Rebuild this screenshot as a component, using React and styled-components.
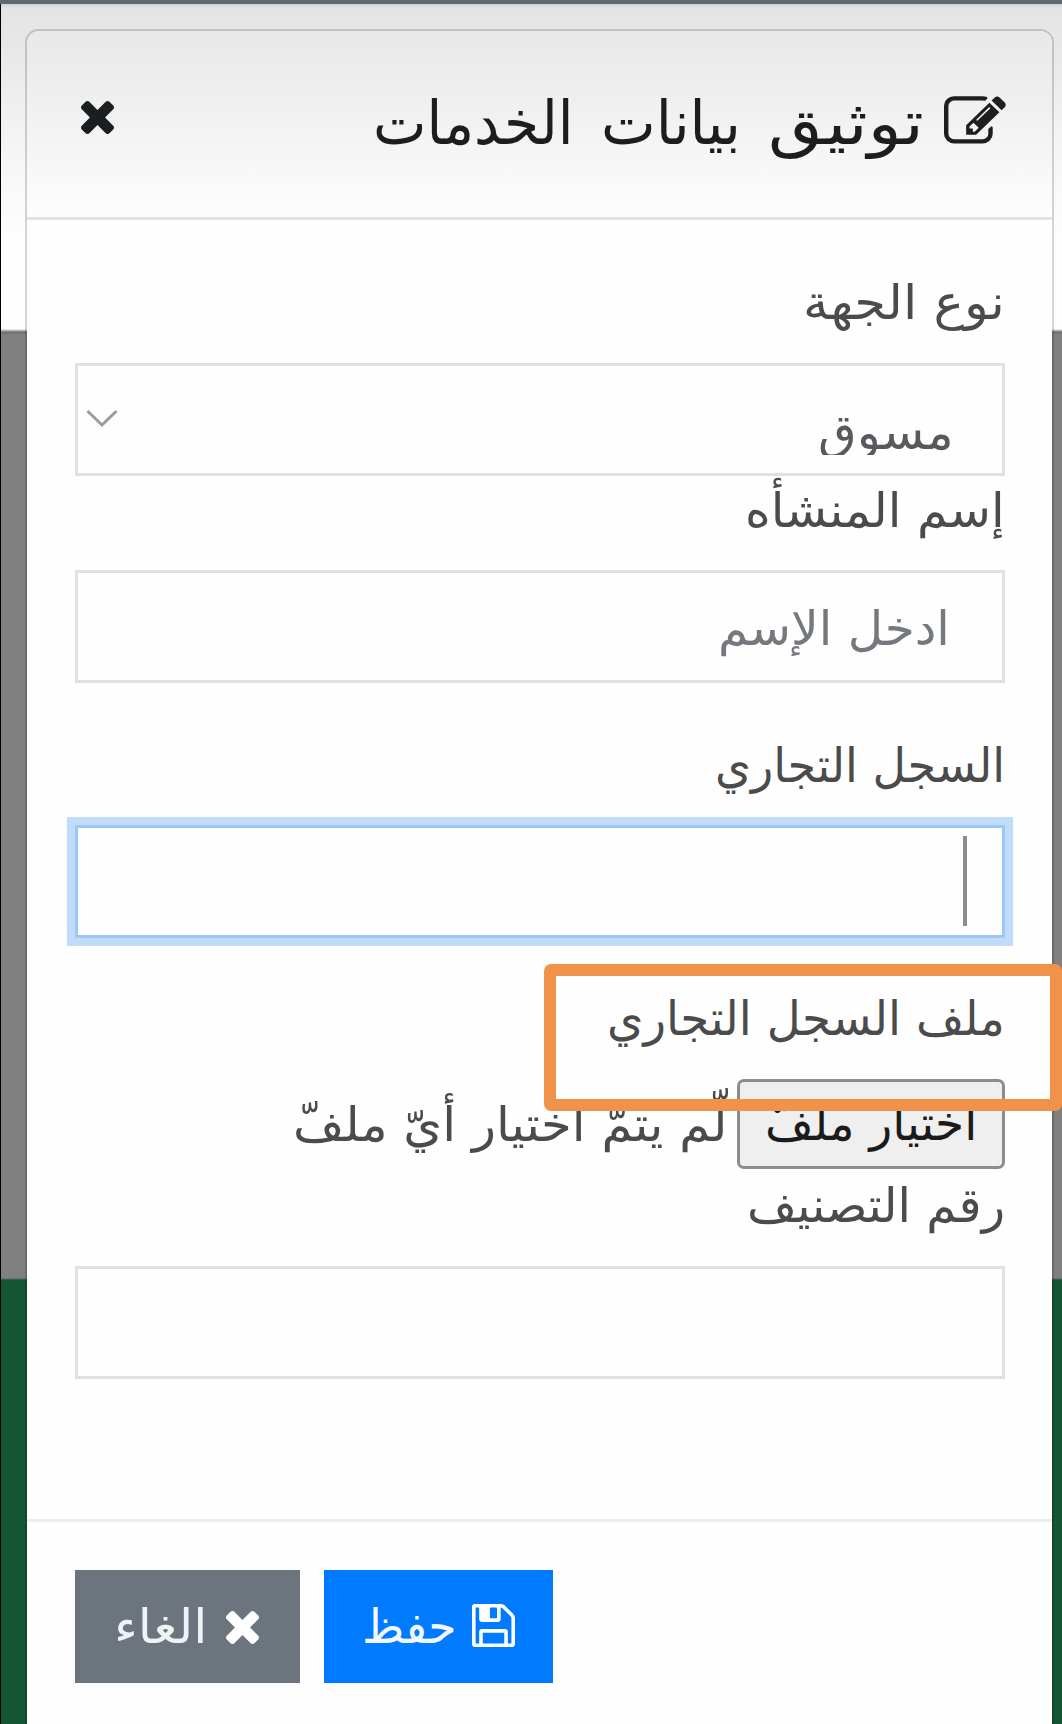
import React, { useLayoutEffect, useRef, useState } from "react";
import styled, { createGlobalStyle } from "styled-components";

const Global = createGlobalStyle`
  *, *::before, *::after { box-sizing: border-box; }
  html, body { margin: 0; padding: 0; }
  body { font-family: "DejaVu Sans", sans-serif; overflow: hidden; }
`;

const Page = styled.div`
  position: relative;
  width: 1062px;
  height: 1724px;
  overflow: hidden;
  direction: rtl;
  border-top: 4px solid #60676d;
  background: linear-gradient(
    to bottom,
    #d2d2d2 0, #e4e4e4 4px, #e7e7e7 40px, #f3f3f3 130px, #fefefe 236px, #fefefe 325px,
    #6f6f6f 328px, #808080 331px, #808080 1274px, #145536 1276px, #145536 100%
  );
  box-shadow: inset 1px 0 0 #000;
`;

const Modal = styled.section`
  display: flex;
  flex-direction: column;
  width: 1029px;
  height: 1740px;
  margin: 25px 8px 0 0;
  border: 2px solid rgba(0, 0, 0, 0.16);
  border-radius: 14px 14px 0 0;
  background: #fefefe;
  background-clip: padding-box;
`;

const Header = styled.header`
  display: flex;
  align-items: flex-start;
  height: 189px;
  padding: 0 46px 0 54px;
  border-bottom: 3px solid #e3e3e3;
  border-radius: 12px 12px 0 0;
  background: linear-gradient(to bottom, #e8e8e8, #f2f2f2 50%, #fdfdfd);
`;

const TitleIcon = styled.svg`
  width: 62px;
  height: 60px;
  margin: 61px 0 0 20px;
  fill: #1c1e20;
`;

const Title = styled.h1`
  display: flex;
  gap: 27px;
  margin: 52px 0 0;
  font-weight: 400;
`;

const CloseIcon = styled.svg`
  width: 33px;
  height: 33px;
  margin: 70px auto 0 0;
  fill: #1b1e21;
`;

const Line = styled.span`
  display: block;
  flex: none;
  width: ${(p) => p.$width}px;
  height: ${(p) => p.$height}px;
  line-height: ${(p) => p.$height}px;
  font-size: ${(p) => p.$size}px;
  color: ${(p) => p.$color};
  margin-top: ${(p) => p.$top || 0}px;
  margin-right: ${(p) => p.$right || 0}px;
  ${(p) => p.$clip && "overflow: hidden;"}
`;

const Glyphs = styled.span`
  display: inline-block;
  white-space: nowrap;
  transform-origin: right center;
`;

function Text({ width, size = 48, height = 60, color = "#4b4b4c", top, right, clip, children }) {
  const ref = useRef(null);
  const [scale, setScale] = useState(1);
  useLayoutEffect(() => {
    setScale(width / ref.current.offsetWidth);
  }, [width, size, children]);
  return (
    <Line $width={width} $size={size} $height={height} $color={color} $top={top} $right={right} $clip={clip}>
      <Glyphs ref={ref} style={{ transform: `scaleX(${scale})` }}>{children}</Glyphs>
    </Line>
  );
}

const Body = styled.div`
  display: flex;
  flex-direction: column;
  height: 1299px;
  padding: 0 47px 0 48px;
`;

const Label = styled.label`
  display: flex;
  height: 60px;
  margin: ${(p) => p.$top}px 0 ${(p) => p.$gap}px;
`;

const Control = styled.div`
  display: flex;
  align-items: flex-start;
  flex: none;
  height: 113px;
  border: 3px solid ${(p) => (p.$focused ? "#9cc8f5" : "#e0e1e2")};
  background: #fefefe;
  ${(p) => p.$focused && "box-shadow: 0 0 0 8px #c0dcfa;"}
`;

const Caret = styled.span`
  width: 4px;
  height: 90px;
  margin: 8px 35px 0 0;
  background: #8c8c8c;
`;

const Chevron = styled.svg`
  width: 32px;
  height: 19px;
  margin: 43px auto 0 8px;
  fill: none;
  stroke: #9a9b9c;
  stroke-width: 3;
`;

const FileRow = styled.div`
  display: flex;
  align-items: center;
  flex: none;
  height: 90px;
`;

const FileButton = styled.div`
  display: flex;
  justify-content: center;
  width: 268px;
  height: 90px;
  margin-left: 10px;
  border: 3px solid #8c8c8c;
  border-radius: 7px;
  background: #efefef;
`;

const Footer = styled.footer`
  display: flex;
  justify-content: flex-end;
  gap: 24px;
  padding: 48px 0 0 48px;
  border-top: 3px solid #ededee;
`;

const Button = styled.div`
  display: flex;
  align-items: flex-start;
  height: 113px;
  width: ${(p) => p.$width}px;
  padding-right: ${(p) => p.$pad}px;
  background: ${(p) => p.$bg};
`;

const ButtonIcon = styled.svg`
  width: ${(p) => p.$size}px;
  height: ${(p) => p.$size}px;
  margin: ${(p) => p.$top}px 0 0 ${(p) => p.$gap}px;
  fill: #fff;
`;

const Highlight = styled.div`
  position: absolute;
  top: 960px;
  left: 544px;
  width: 518px;
  height: 147px;
  border: 12px solid #f1924b;
  border-radius: 7px;
`;

const TIMES =
  "M1298 1214q0 40-28 68l-136 136q-28 28-68 28t-68-28l-294-294-294 294q-28 28-68 28t-68-28l-136-136q-28-28-28-68t28-68l294-294-294-294q-28-28-28-68t28-68l136-136q28-28 68-28t68 28l294 294 294-294q28-28 68-28t68 28l136 136q28 28 28 68t-28 68l-294 294 294 294q28 28 28 68z";
const EDIT =
  "M888 1184l116-116-152-152-116 116v56h96v96h56zm440-720q-16-16-33 1l-350 350q-17 17-1 33t33-1l350-350q17-17 1-33zm80 594v190q0 119-84.5 203.5t-203.5 84.5h-832q-119 0-203.5-84.5t-84.5-203.5v-832q0-119 84.5-203.5t203.5-84.5h832q63 0 117 25 15 7 18 23 3 17-9 29l-49 49q-14 14-32 8-23-6-45-6h-832q-66 0-113 47t-47 113v832q0 66 47 113t113 47h832q66 0 113-47t47-113v-126q0-13 9-22l64-64q15-15 35-7t20 29zm-96-738l288 288-672 672h-288v-288zm444 132l-92 92-288-288 92-92q28-28 68-28t68 28l152 152q28 28 28 68t-28 68z";
const SAVE =
  "M512 1536h768v-384h-768v384zm896 0h128v-896q0-14-10-38.5t-20-34.5l-281-281q-10-10-34-20t-39-10v416q0 40-28 68t-68 28h-576q-40 0-68-28t-28-68v-416h-128v1280h128v-416q0-40 28-68t68-28h832q40 0 68 28t28 68v416zm-384-928v-320q0-13-9.5-22.5t-22.5-9.5h-192q-13 0-22.5 9.5t-9.5 22.5v320q0 13 9.5 22.5t22.5 9.5h192q13 0 22.5-9.5t9.5-22.5zm640 32v928q0 40-28 68t-68 28h-1344q-40 0-68-28t-28-68v-1344q0-40 28-68t68-28h928q40 0 88 20t76 48l280 280q28 28 48 76t20 88z";

const TITLE_WORDS = [
  { word: "توثيق", width: 156 },
  { word: "بيانات", width: 140 },
  { word: "الخدمات", width: 201 },
];

export default function App() {
  return (
    <>
      <Global />
      <Page>
        <Modal>
          <Header>
            <TitleIcon viewBox="0 0 1792 1792" preserveAspectRatio="none"><path d={EDIT} /></TitleIcon>
            <Title>
              {TITLE_WORDS.map(({ word, width }) => (
                <Text key={word} width={width} size={61} height={80} color="#1c1d1e">{word}</Text>
              ))}
            </Title>
            <CloseIcon viewBox="110 292 1188 1188"><path d={TIMES} transform="translate(0 34)" /></CloseIcon>
          </Header>
          <Body>
            <Label $top={52} $gap={31}><Text width={202}>نوع الجهة</Text></Label>
            <Control>
              <Text width={136} height={46} top={43} right={48} color="#57595c" clip>مسوق</Text>
              <Chevron viewBox="0 0 32 19"><path d="M1.5 2 16 16 30.500 2" /></Chevron>
            </Control>
            <Label $top={4} $gap={30}><Text width={260}>إسم المنشأه</Text></Label>
            <Control>
              <Text width={232} top={25} right={52} color="#75797e">ادخل الإسم</Text>
            </Control>
            <Label $top={52} $gap={30}><Text width={290}>السجل التجاري</Text></Label>
            <Control $focused><Caret /></Control>
            <Label $top={50} $gap={31}><Text width={398}>ملف السجل التجاري</Text></Label>
            <FileRow>
              <FileButton><Text width={212} top={11} color="#1b1b1b">اختيار ملفّ</Text></FileButton>
              <Text width={434}>لّم يتمّ اختيار أيّ ملفّ</Text>
            </FileRow>
            <Label $top={6} $gap={31}><Text width={258}>رقم التصنيف</Text></Label>
            <Control />
          </Body>
          <Footer>
            <Button $width={229} $pad={38} $bg="#007bff">
              <ButtonIcon viewBox="128 128 1536 1536" $size={43} $top={34} $gap={15}><path d={SAVE} /></ButtonIcon>
              <Text width={95} top={26} color="#f3f8ff">حفظ</Text>
            </Button>
            <Button $width={225} $pad={41} $bg="#6c757d">
              <ButtonIcon viewBox="110 326 1188 1188" $size={33} $top={41} $gap={19}><path d={TIMES} transform="translate(0 68)" /></ButtonIcon>
              <Text width={93} top={26} color="#f0f3f6">الغاء</Text>
            </Button>
          </Footer>
        </Modal>
        <Highlight />
      </Page>
    </>
  );
}
